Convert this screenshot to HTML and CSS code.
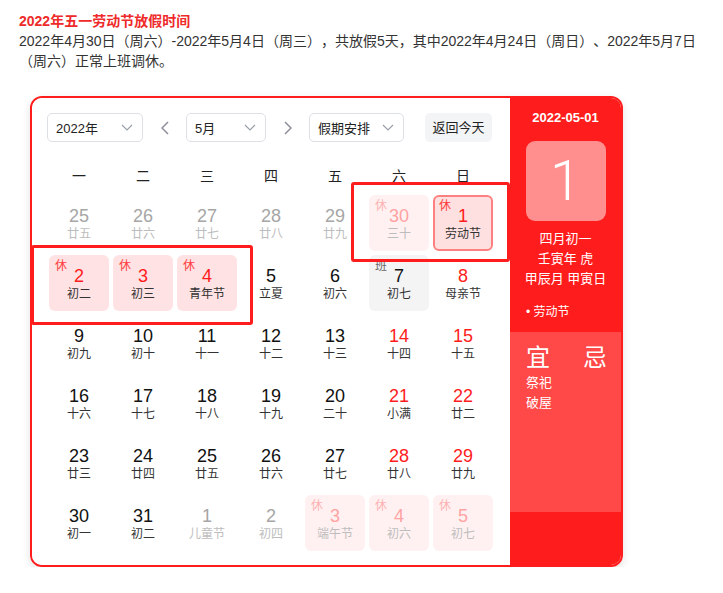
FILE: index.html
```html
<!DOCTYPE html>
<html lang="zh-CN">
<head>
<meta charset="utf-8">
<title>2022年五一劳动节放假时间</title>
<link rel="stylesheet" href="styles.css">
</head>
<body>
<h3 class="title">2022年五一劳动节放假时间</h3>
<p class="desc">2022年4月30日（周六）-2022年5月4日（周三），共放假5天，其中2022年4月24日（周日）、2022年5月7日（周六）正常上班调休。</p>

<div class="calendar">
  <div class="main">
    <div class="toolbar">
      <div class="select sel-year"><span>2022年</span><svg class="chev" viewBox="0 0 12 7" width="12" height="7"><path d="M1 1l5 5 5-5" fill="none" stroke="#9aa0a8" stroke-width="1.2"/></svg></div>
      <div class="arrow"><svg viewBox="0 0 8 14" width="8" height="14"><path d="M7 1L1 7l6 6" fill="none" stroke="#8c9099" stroke-width="1.5"/></svg></div>
      <div class="select sel-month"><span>5月</span><svg class="chev" viewBox="0 0 12 7" width="12" height="7"><path d="M1 1l5 5 5-5" fill="none" stroke="#9aa0a8" stroke-width="1.2"/></svg></div>
      <div class="arrow"><svg viewBox="0 0 8 14" width="8" height="14"><path d="M1 1l6 6-6 6" fill="none" stroke="#8c9099" stroke-width="1.5"/></svg></div>
      <div class="select sel-hol"><span>假期安排</span><svg class="chev" viewBox="0 0 12 7" width="12" height="7"><path d="M1 1l5 5 5-5" fill="none" stroke="#9aa0a8" stroke-width="1.2"/></svg></div>
      <div class="btn-today">返回今天</div>
    </div>
    <div class="weekdays">
      <span>一</span><span>二</span><span>三</span><span>四</span><span>五</span><span>六</span><span>日</span>
    </div>
    <div class="grid">
      <div class="day other"><div class="num">25</div><div class="lunar">廿五</div></div>
      <div class="day other"><div class="num">26</div><div class="lunar">廿六</div></div>
      <div class="day other"><div class="num">27</div><div class="lunar">廿七</div></div>
      <div class="day other"><div class="num">28</div><div class="lunar">廿八</div></div>
      <div class="day other"><div class="num">29</div><div class="lunar">廿九</div></div>
      <div class="day other rest"><i class="tag">休</i><div class="num">30</div><div class="lunar">三十</div></div>
      <div class="day rest selected"><i class="tag">休</i><div class="num">1</div><div class="lunar">劳动节</div></div>

      <div class="day rest"><i class="tag">休</i><div class="num">2</div><div class="lunar">初二</div></div>
      <div class="day rest"><i class="tag">休</i><div class="num">3</div><div class="lunar">初三</div></div>
      <div class="day rest"><i class="tag">休</i><div class="num">4</div><div class="lunar">青年节</div></div>
      <div class="day"><div class="num">5</div><div class="lunar">立夏</div></div>
      <div class="day"><div class="num">6</div><div class="lunar">初六</div></div>
      <div class="day work"><i class="tag">班</i><div class="num">7</div><div class="lunar">初七</div></div>
      <div class="day weekend"><div class="num">8</div><div class="lunar">母亲节</div></div>

      <div class="day"><div class="num">9</div><div class="lunar">初九</div></div>
      <div class="day"><div class="num">10</div><div class="lunar">初十</div></div>
      <div class="day"><div class="num">11</div><div class="lunar">十一</div></div>
      <div class="day"><div class="num">12</div><div class="lunar">十二</div></div>
      <div class="day"><div class="num">13</div><div class="lunar">十三</div></div>
      <div class="day weekend"><div class="num">14</div><div class="lunar">十四</div></div>
      <div class="day weekend"><div class="num">15</div><div class="lunar">十五</div></div>

      <div class="day"><div class="num">16</div><div class="lunar">十六</div></div>
      <div class="day"><div class="num">17</div><div class="lunar">十七</div></div>
      <div class="day"><div class="num">18</div><div class="lunar">十八</div></div>
      <div class="day"><div class="num">19</div><div class="lunar">十九</div></div>
      <div class="day"><div class="num">20</div><div class="lunar">二十</div></div>
      <div class="day weekend"><div class="num">21</div><div class="lunar">小满</div></div>
      <div class="day weekend"><div class="num">22</div><div class="lunar">廿二</div></div>

      <div class="day"><div class="num">23</div><div class="lunar">廿三</div></div>
      <div class="day"><div class="num">24</div><div class="lunar">廿四</div></div>
      <div class="day"><div class="num">25</div><div class="lunar">廿五</div></div>
      <div class="day"><div class="num">26</div><div class="lunar">廿六</div></div>
      <div class="day"><div class="num">27</div><div class="lunar">廿七</div></div>
      <div class="day weekend"><div class="num">28</div><div class="lunar">廿八</div></div>
      <div class="day weekend"><div class="num">29</div><div class="lunar">廿九</div></div>

      <div class="day"><div class="num">30</div><div class="lunar">初一</div></div>
      <div class="day"><div class="num">31</div><div class="lunar">初二</div></div>
      <div class="day other"><div class="num">1</div><div class="lunar">儿童节</div></div>
      <div class="day other"><div class="num">2</div><div class="lunar">初四</div></div>
      <div class="day other rest"><i class="tag">休</i><div class="num">3</div><div class="lunar">端午节</div></div>
      <div class="day other rest"><i class="tag">休</i><div class="num">4</div><div class="lunar">初六</div></div>
      <div class="day other rest"><i class="tag">休</i><div class="num">5</div><div class="lunar">初七</div></div>
    </div>
  </div>
  <div class="side">
    <div class="side-top">
      <div class="side-date">2022-05-01</div>
      <div class="big-day">1</div>
      <div class="side-lunar">
        <div>四月初一</div>
        <div>壬寅年 虎</div>
        <div>甲辰月 甲寅日</div>
      </div>
      <div class="side-fest">• 劳动节</div>
    </div>
    <div class="side-mid">
      <div class="yiji"><span>宜</span><span>忌</span></div>
      <div class="yi-list"><div>祭祀</div><div>破屋</div></div>
    </div>
    <div class="side-bottom"></div>
  </div>
  <div class="mark mark-a"></div>
  <div class="mark mark-b"></div>
</div>
</body>
</html>
```
FILE: styles.css
```css
* { box-sizing: border-box; }
html, body { margin: 0; padding: 0; background: #fff; }
body {
  padding: 11px 19px 0 19px;
  font-family: "Liberation Sans", Arial, "Noto Sans CJK SC", sans-serif;
  color: #333;
  font-size: 14px;
  text-spacing-trim: space-all;
}
.title {
  margin: 0;
  font-size: 14px;
  line-height: 20px;
  font-weight: bold;
  color: #ee2a2a;
}
.desc {
  margin: 0;
  font-size: 14px;
  line-height: 20px;
  color: #333;
  width: 690px;
  text-spacing-trim: space-all;
}
.calendar {
  position: relative;
  margin: 25px 0 0 11px;
  width: 593px;
  height: 471px;
  border: 2px solid #ff1c1c;
  border-radius: 12px;
  display: flex;
  overflow: hidden;
  box-shadow: 0 3px 8px rgba(0,0,0,0.12);
}
.main {
  width: 478px;
  background: #fff;
  padding: 15px 15px 12px 15px;
}
.toolbar {
  display: flex;
  align-items: center;
  height: 29px;
}
.select {
  height: 29px;
  border: 1px solid #dcdfe6;
  border-radius: 5px;
  display: flex;
  align-items: center;
  justify-content: space-between;
  padding: 0 9px 0 8px;
  font-size: 13px;
  color: #222;
}
.sel-year { width: 96px; }
.sel-month { width: 80px; }
.sel-hol { width: 95px; }
.chev { display: block; }
.arrow {
  width: 43px;
  display: flex;
  justify-content: center;
  align-items: center;
}
.arrow svg { display: block; }
.btn-today {
  margin-left: 21px;
  height: 29px;
  width: 67px;
  border-radius: 5px;
  background: #f3f4f5;
  font-size: 13px;
  line-height: 29px;
  text-align: center;
  color: #222;
}
.weekdays {
  margin-top: 17px;
  height: 34px;
  display: grid;
  grid-template-columns: repeat(7, 64px);
  font-size: 14px;
  line-height: 34px;
  text-align: center;
  color: #222;
}
.grid {
  display: grid;
  grid-template-columns: repeat(7, 64px);
  grid-auto-rows: 60px;
}
.day {
  position: relative;
  margin: 2px;
  border-radius: 6px;
  text-align: center;
  padding-top: 11px;
}
.num {
  font-size: 18px;
  line-height: 20px;
  color: #111;
}
.lunar {
  font-size: 12px;
  line-height: 16px;
  color: #333;
}
.tag {
  position: absolute;
  left: 6px;
  top: 3px;
  font-style: normal;
  font-size: 12px;
  line-height: 16px;
}
.weekend .num { color: #ff1c1c; }
.other .num { color: #a6a6a6; }
.other .lunar { color: #bdbdbd; }
.rest { background: #ffe2e3; }
.rest .num { color: #ff1c1c; }
.rest .tag { color: #ff3b3b; }
.other.rest { background: #fff1f1; }
.other.rest .num { color: #ffa3a3; }
.other.rest .tag { color: #ffb2b2; }
.selected {
  background: #ffe0e0;
  border: 2px solid #ff8080;
  padding-top: 9px;
}
.selected .tag { left: 4px; top: 1px; }
.work { background: #f4f4f5; }
.work .tag { color: #666; }

.side {
  width: 111px;
  background: #ff1c1c;
  color: #fff;
  display: flex;
  flex-direction: column;
}
.side-top {
  height: 234px;
  padding-top: 10px;
  text-align: center;
}
.side-date {
  font-size: 13px;
  font-weight: bold;
  line-height: 20px;
}
.big-day {
  margin: 13px auto 0;
  width: 80px;
  height: 80px;
  border-radius: 9px;
  background: rgba(255,255,255,0.5);
  font-family: Roboto, "Liberation Sans", sans-serif;
  font-weight: 300;
  font-size: 56px;
  line-height: 80px;
}
.side-lunar {
  margin-top: 8px;
  font-size: 13px;
  line-height: 20px;
}
.side-fest {
  margin-top: 13px;
  text-align: left;
  padding-left: 16px;
  font-size: 12px;
  line-height: 20px;
}
.side-mid {
  height: 180px;
  background: #ff4848;
  padding: 10px 0 0 16px;
}
.yiji {
  display: flex;
  gap: 33px;
  font-size: 24px;
  line-height: 31px;
}
.yi-list {
  font-size: 13px;
  line-height: 20px;
}
.side-bottom { flex: 1; }

.mark {
  position: absolute;
  border: 3px solid #ff1c1c;
  border-radius: 3px;
}
.mark-a { left: 319px; top: 84px; width: 159px; height: 80px; }
.mark-b { left: -1px; top: 147px; width: 222px; height: 80px; }
```
